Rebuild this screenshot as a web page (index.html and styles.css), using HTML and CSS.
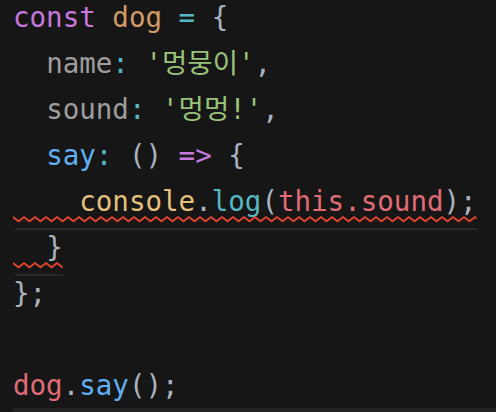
FILE: index.html
```html
<!DOCTYPE html>
<html lang="ko">
<head>
    <meta charset="UTF-8">
    <meta name="viewport" content="width=device-width, initial-scale=1.0">
    <title>dog.js</title>
    <link rel="stylesheet" href="styles.css">
</head>
<body>
    <div class="editor">
        <div class="line"><span class="kw">const</span> <span class="def">dog</span> <span class="op">=</span> <span class="pn">{</span></div>
        <div class="line">  <span class="prop">name</span><span class="op">:</span> <span class="str">'멍뭉이'</span><span class="pn">,</span></div>
        <div class="line">  <span class="prop">sound</span><span class="op">:</span> <span class="str">'멍멍!'</span><span class="pn">,</span></div>
        <div class="line">  <span class="fn">say</span><span class="op">:</span> <span class="pn">()</span> <span class="kw">=&gt;</span> <span class="pn">{</span></div>
        <div class="line"><span class="err">    <span class="obj">console</span><span class="pn">.</span><span class="call">log</span><span class="pn">(</span><span class="var">this.sound</span><span class="pn">);</span><svg class="squiggle" width="100%" height="8"><rect width="100%" height="8" fill="url(#wave)"/></svg></span></div>
        <div class="line"><span class="err">  <span class="pn">}</span><svg class="squiggle" width="100%" height="8"><rect width="100%" height="8" fill="url(#wave)"/></svg></span></div>
        <div class="line"><span class="pn">};</span></div>
        <div class="line"> </div>
        <div class="line"><span class="var">dog</span><span class="pn">.</span><span class="fn">say</span><span class="pn">();</span></div>
        <div class="line current"> </div>
    </div>

    <svg class="defs" width="0" height="0">
        <defs>
            <pattern id="wave" width="11" height="8" patternUnits="userSpaceOnUse">
                <path d="M-0.5 1.8 L5.5 6.2 L11.5 1.8" fill="none" stroke="#e4432d" stroke-width="1.9"/>
            </pattern>
        </defs>
    </svg>
</body>
</html>
```

FILE: styles.css
```css
/* Nền tối kiểu trình soạn thảo code */
* {
    margin: 0;
    padding: 0;
    box-sizing: border-box;
}

html,
body {
    height: 100%;
    overflow: hidden;
}

body {
    background-color: #161616;
    color: #abb2bf;
    font-family: "DejaVu Sans Mono", "Noto Sans CJK KR", monospace;
    font-size: 27.5px;
}

.editor {
    height: 100%;
    margin-top: -6px;
    padding-left: 13px;
}

.line {
    height: 46px;
    line-height: 46px;
    white-space: pre;
}

.line.current {
    background-color: #232323;
}

/* Màu cú pháp */
.kw { color: #c678dd; }
.def { color: #d19a66; }
.op { color: #56b6c2; }
.pn { color: #abb2bf; }
.prop { color: #9e9e9e; }
.str { color: #98c379; }
.fn { color: #61afef; }
.obj { color: #e5c07b; }
.call { color: #56b6c2; }
.var { color: #e06c75; }

/* Gạch chân lỗi */
.err {
    position: relative;
    display: inline-block;
    height: 46px;
    vertical-align: top;
}

.err .squiggle {
    position: absolute;
    left: 0;
    top: 37px;
}

.err::after {
    content: "";
    position: absolute;
    left: 2px;
    right: 0;
    top: 50px;
    height: 2px;
    background-color: #2a2a2a;
}

.defs {
    position: absolute;
}
```
